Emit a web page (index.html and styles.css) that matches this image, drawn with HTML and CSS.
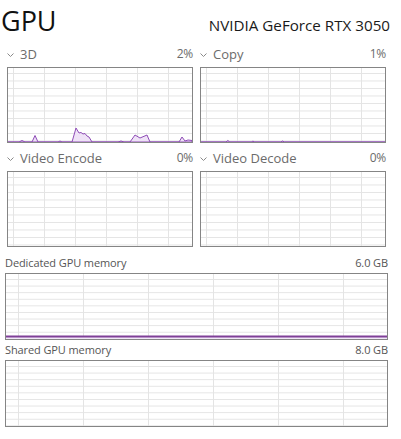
FILE: index.html
```html
<!DOCTYPE html>
<html lang="en">
<head>
<meta charset="utf-8">
<title>GPU</title>
<link rel="stylesheet" href="styles.css">
</head>
<body>
<div class="page">
  <header class="head">
    <h1 class="title">GPU</h1>
    <div class="model">NVIDIA GeForce RTX 3050</div>
  </header>

  <div class="engines">
    <div class="engine">
      <div class="label-row">
        <span class="name"><svg class="chev" viewBox="0 0 7 4" width="7" height="4"><polyline points="0.5,0.5 3.5,3.5 6.5,0.5"/></svg>3D</span>
        <span class="val">2%</span>
      </div>
      <div class="graph">
        <svg class="plot" viewBox="0 0 184 74" preserveAspectRatio="none">
          <polygon class="area" points="0,74 11,74 14,72.5 17,74 24,74 27,67.5 30,74 50,74 52,73 54,74 64,74 68,60 71,65 73,64.5 75,66 77,65.5 79,68 81,69 84,74 110,74 113,73 116,74 122,74 127,67 132,70 139,67 142,74 171,74 174,69 177,73 180,72 184,72.5 184,74"/>
        </svg>
      </div>
    </div>
    <div class="engine">
      <div class="label-row">
        <span class="name"><svg class="chev" viewBox="0 0 7 4" width="7" height="4"><polyline points="0.5,0.5 3.5,3.5 6.5,0.5"/></svg>Copy</span>
        <span class="val">1%</span>
      </div>
      <div class="graph">
        <svg class="plot" viewBox="0 0 185 74" preserveAspectRatio="none">
          <polygon class="area" points="0,74 25,74 27,72.5 29,74 51,74 52,73 54,74 80,74 82,73 84,74 185,74"/>
        </svg>
      </div>
    </div>
    <div class="engine">
      <div class="label-row">
        <span class="name"><svg class="chev" viewBox="0 0 7 4" width="7" height="4"><polyline points="0.5,0.5 3.5,3.5 6.5,0.5"/></svg>Video Encode</span>
        <span class="val">0%</span>
      </div>
      <div class="graph"></div>
    </div>
    <div class="engine">
      <div class="label-row">
        <span class="name"><svg class="chev" viewBox="0 0 7 4" width="7" height="4"><polyline points="0.5,0.5 3.5,3.5 6.5,0.5"/></svg>Video Decode</span>
        <span class="val">0%</span>
      </div>
      <div class="graph"></div>
    </div>
  </div>

  <section class="mem">
    <div class="mem-label"><span>Dedicated GPU memory</span><span>6.0 GB</span></div>
    <div class="mem-graph">
      <svg class="plot" viewBox="0 0 382 65" preserveAspectRatio="none">
        <rect class="mem-fill" x="0" y="62" width="382" height="3"/>
        <line class="mem-line" x1="0" y1="62.5" x2="382" y2="62.5"/>
      </svg>
    </div>
    <div class="mem-label shared"><span>Shared GPU memory</span><span>8.0 GB</span></div>
    <div class="mem-graph"></div>
  </section>
</div>
</body>
</html>
```

FILE: styles.css
```css
html, body {
  margin: 0;
  padding: 0;
  background: #ffffff;
}

body {
  font-family: "Open Sans", "Noto Sans", sans-serif;
  color: #1a1a1a;
}

.page {
  width: 401px;
}

.head {
  display: flex;
  justify-content: space-between;
  align-items: baseline;
  margin: 3px 11px 0 1px;
  height: 36px;
}

.title {
  margin: 0;
  font-size: 27px;
  font-weight: 400;
  line-height: 36px;
  color: #111111;
}

.model {
  font-size: 15.2px;
  line-height: 20px;
  color: #1a1a1a;
}

.engines {
  display: grid;
  grid-template-columns: 186px 186px;
  column-gap: 7px;
  row-gap: 6px;
  margin: 6px 15px 0 7px;
}

.label-row {
  display: flex;
  justify-content: space-between;
  align-items: center;
  height: 18px;
  line-height: 18px;
  font-size: 13px;
  color: #6b6b6b;
  margin-bottom: 4px;
}

.name {
  display: flex;
  align-items: center;
}

.chev {
  width: 7px;
  height: 4px;
  margin: 1px 6px 0 0;
  fill: none;
  stroke: #8a8a8a;
  stroke-width: 1;
}

.val {
  font-size: 12px;
  letter-spacing: -0.3px;
}

.graph {
  position: relative;
  height: 74px;
  border: 1px solid #858585;
  background-color: #ffffff;
  background-image:
    linear-gradient(to right, #e4e4e4 1px, transparent 1px),
    linear-gradient(to bottom, #e4e4e4 1px, transparent 1px);
  background-size: 31px 100%, 100% 7.5px;
  background-position: 5px 0, 0 5px;
}

.plot {
  display: block;
  width: 100%;
  height: 100%;
}

.area {
  fill: #efe2f7;
  stroke: #8e4cb6;
  stroke-width: 1;
  stroke-linejoin: round;
}

.mem {
  margin: 8px 13px 0 5px;
}

.mem-label {
  display: flex;
  justify-content: space-between;
  height: 16px;
  line-height: 16px;
  font-size: 11px;
  letter-spacing: -0.1px;
  color: #555555;
  margin-bottom: 2px;
}

.mem-label.shared {
  margin-top: 2px;
}

.mem-graph {
  height: 65px;
  border: 1px solid #858585;
  background-color: #ffffff;
  background-image:
    linear-gradient(to right, #e4e4e4 1px, transparent 1px),
    linear-gradient(to bottom, #e4e4e4 1px, transparent 1px);
  background-size: 65px 100%, 100% 6.6px;
  background-position: 12px 0, 0 5px;
}

.mem-fill {
  fill: #f1e6f7;
}

.mem-line {
  stroke: #7f3f98;
  stroke-width: 2;
}
```
